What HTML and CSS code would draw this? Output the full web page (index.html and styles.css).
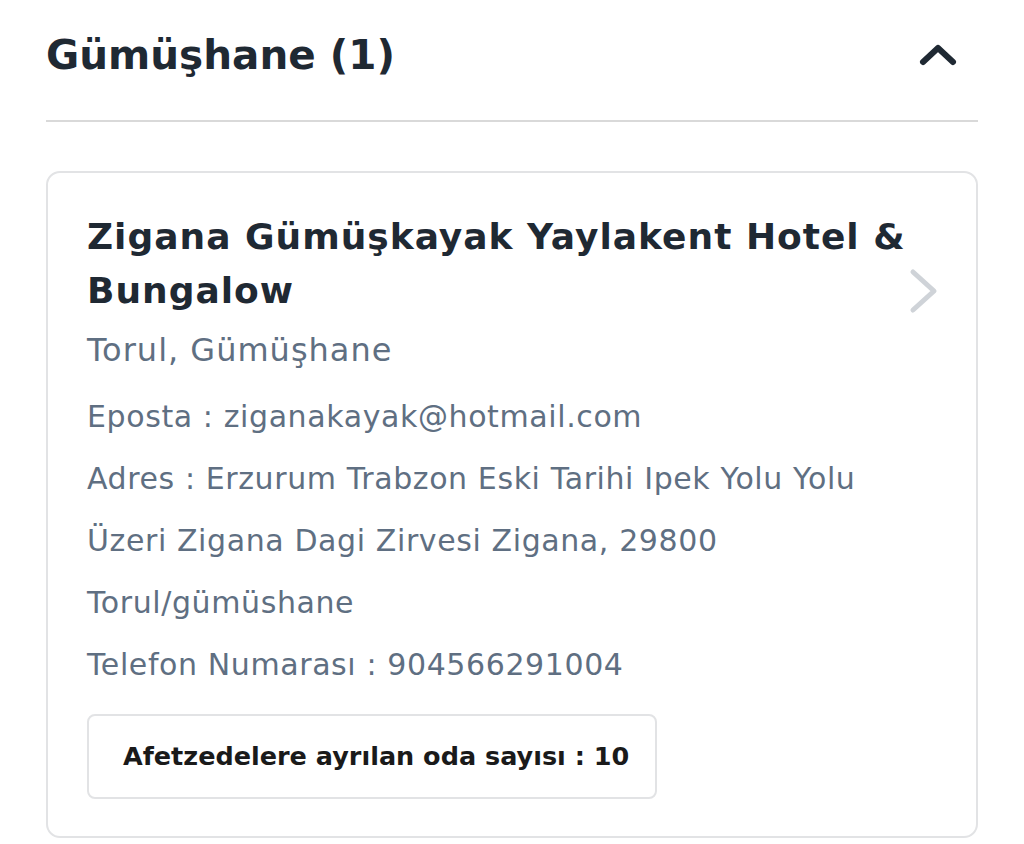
FILE: index.html
```html
<!DOCTYPE html>
<html lang="tr">
<head>
<meta charset="utf-8">
<link rel="stylesheet" href="styles.css">
</head>
<body>
<div class="page">
  <div class="section-head">
    <h2 class="section-title">Gümüşhane (1)</h2>
    <svg class="chev-up" width="40" height="28" viewBox="0 0 40 28"><path d="M5 21 L20 7 L35 21" fill="none" stroke="#1f2933" stroke-width="6" stroke-linecap="round" stroke-linejoin="round"/></svg>
  </div>
  <div class="divider"></div>
  <div class="card">
    <div class="card-top">
      <div class="card-main">
        <h3 class="hotel-name">Zigana Gümüşkayak Yaylakent Hotel &amp; Bungalow</h3>
        <div class="location">Torul, Gümüşhane</div>
      </div>
      <svg class="chev-right" width="30" height="46" viewBox="0 0 30 46"><path d="M4 4 L25 23 L4 42" fill="none" stroke="#cfd3d8" stroke-width="5" stroke-linecap="round" stroke-linejoin="round"/></svg>
    </div>
    <div class="info">
      <p class="line">Eposta : ziganakayak@hotmail.com</p>
      <p class="line">Adres : Erzurum Trabzon Eski Tarihi Ipek Yolu Yolu</p>
      <p class="line">Üzeri Zigana Dagi Zirvesi Zigana, 29800</p>
      <p class="line">Torul/gümüshane</p>
      <p class="line">Telefon Numarası : 904566291004</p>
    </div>
    <div class="rooms">Afetzedelere ayrılan oda sayısı : 10</div>
  </div>
</div>
</body>
</html>
```
FILE: styles.css
```css
* { box-sizing: border-box; }
html, body { margin: 0; padding: 0; background: #fff; }
body { font-family: "DejaVu Sans", "Noto Sans", sans-serif; }
.page { padding: 0 46px; }
.section-head {
  display: flex;
  align-items: center;
  justify-content: space-between;
  height: 110px;
  padding-right: 20px;
}
.section-title {
  margin: 0;
  font-size: 40.5px;
  font-weight: 700;
  color: #1f2933;
}
.divider { height: 2px; background: #d9d9d9; margin-top: 10px; }
.card {
  margin-top: 49px;
  border: 2px solid #e2e3e5;
  border-radius: 14px;
  padding: 37px 39px 37px 39px;
}
.card-top { display: flex; align-items: center; justify-content: space-between; }
.card-main { flex: 1; }
.hotel-name {
  margin: 0;
  font-size: 36px;
  line-height: 54px;
  font-weight: 700;
  letter-spacing: 1px;
  color: #1f2933;
  max-width: 830px;
}
.location {
  margin-top: 11px;
  font-size: 32px;
  line-height: 42px;
  letter-spacing: 1px;
  color: #5f6f82;
}
.chev-right { margin-right: -2px; flex: none; }
.info { margin-top: 15px; }
.line {
  margin: 0;
  font-size: 30px;
  line-height: 62px;
  letter-spacing: 0.6px;
  color: #5f6f82;
}
.rooms {
  display: inline-block;
  margin-top: 18px;
  border: 2px solid #e2e3e5;
  border-radius: 8px;
  padding: 23px 26px 23px 34px;
  font-size: 25.5px;
  line-height: 35px;
  font-weight: 700;
  color: #1a1a1a;
}
```
